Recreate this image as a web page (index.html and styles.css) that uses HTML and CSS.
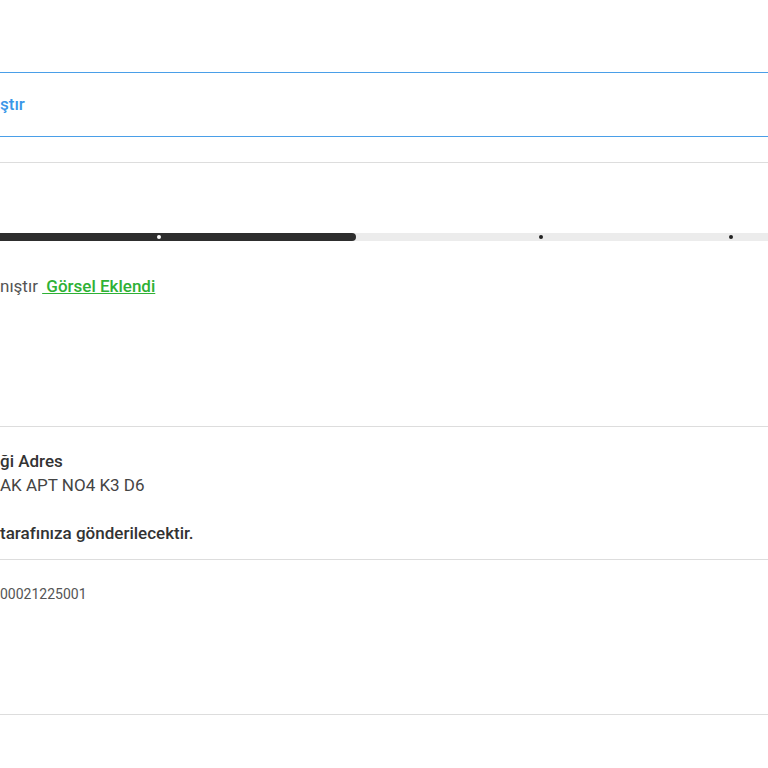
FILE: index.html
```html
<html>
<head>
    <meta charset="utf-8">
    <title>Sipariş Detayı</title>
    <link rel="stylesheet" href="styles.css">
</head>
<body>
    <div class="page">
        <div class="notice">
            <span class="notice-text">ştır</span>
        </div>
        <div class="divider first"></div>

        <div class="status">
            <div class="progress">
                <div class="progress-fill"></div>
                <span class="step done" style="left: 157px"></span>
                <span class="step" style="left: 539px"></span>
                <span class="step" style="left: 729px"></span>
            </div>
            <div class="status-text">
                nıştır <a href="#" class="image-link">&nbsp;Görsel Eklendi</a>
            </div>
        </div>
        <div class="divider"></div>

        <div class="address">
            <div class="address-title">ği Adres</div>
            <div class="address-line">AK APT NO4 K3 D6</div>
            <div class="address-line">&nbsp;</div>
            <div class="address-note">tarafınıza gönderilecektir.</div>
        </div>
        <div class="divider"></div>

        <div class="order-no">
            <div class="order-code">00021225001</div>
        </div>
        <div class="divider"></div>
    </div>
</body>
</html>
```

FILE: styles.css
```css
body {
    margin: 0;
    background: #fff;
    font-family: Roboto, "Noto Sans", sans-serif;
    color: #333;
}

.page {
    padding-top: 72px;
}

.notice {
    display: flex;
    align-items: center;
    height: 65px;
    box-sizing: border-box;
    border-top: 1px solid #4a9fe8;
    border-bottom: 1px solid #4a9fe8;
}

.notice-text {
    font-size: 17px;
    font-weight: 500;
    color: #3a96e8;
    margin-top: -2px;
}

.divider {
    height: 1px;
    background: #dddddd;
}

.divider.first {
    margin-top: 25px;
}

.status {
    padding-top: 70px;
    height: 263px;
    box-sizing: border-box;
}

.progress {
    position: relative;
    height: 8px;
    background: #ececec;
}

.progress-fill {
    width: 356px;
    height: 100%;
    background: #2e2e2e;
    border-radius: 0 4px 4px 0;
}

.step {
    position: absolute;
    top: 2px;
    width: 4px;
    height: 4px;
    border-radius: 50%;
    background: #222;
}

.step.done {
    background: #fff;
}

.status-text {
    margin-top: 33px;
    font-size: 17px;
    line-height: 24px;
    color: #555;
}

.image-link {
    color: #2eb135;
    font-weight: 500;
    text-decoration: underline;
}

.address {
    padding: 22px 0 14px 0;
    font-size: 17px;
    line-height: 24px;
}

.address-title, .address-note {
    font-weight: 500;
    color: #333;
}

.address-line {
    color: #444;
}

.order-no {
    height: 154px;
    padding-top: 24px;
    box-sizing: border-box;
}

.order-code {
    font-size: 14px;
    line-height: 20px;
    color: #555;
}
```
